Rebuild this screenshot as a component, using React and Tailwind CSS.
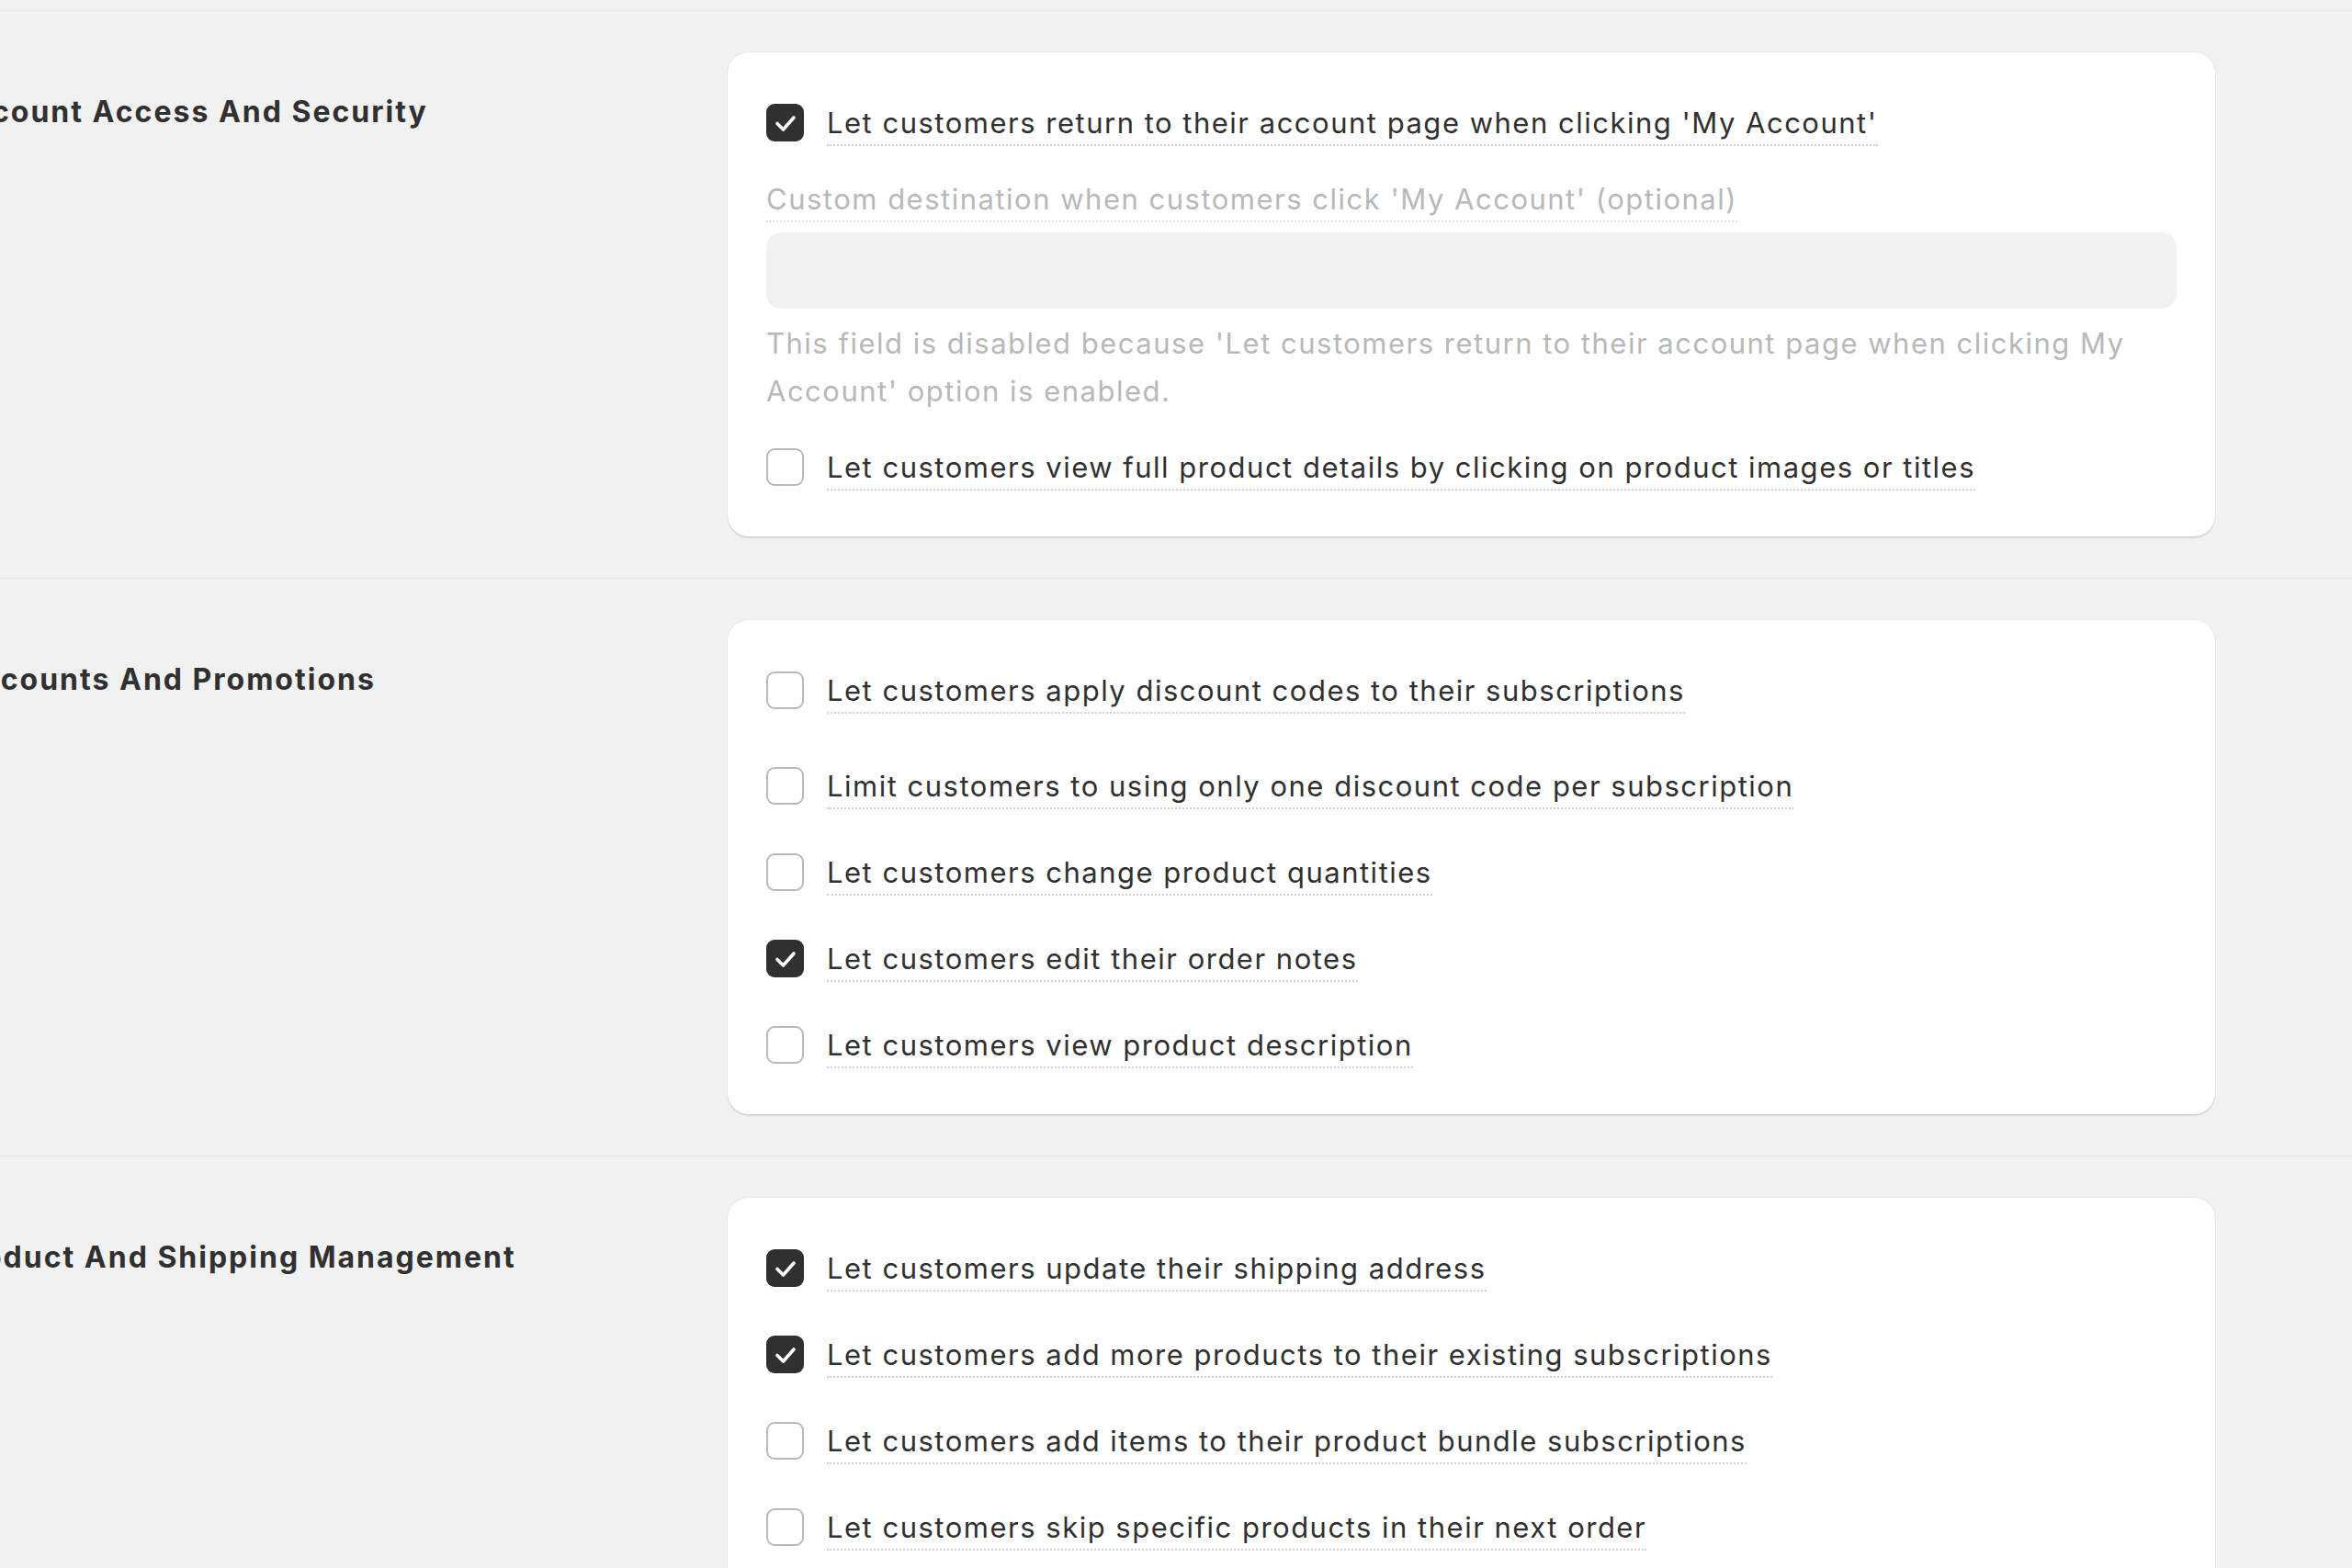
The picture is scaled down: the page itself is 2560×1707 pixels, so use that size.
import React from 'react'

const sections = [
  {
    title: 'Account Access And Security',
    kind: 'account',
  },
  {
    title: 'Discounts And Promotions',
    options: [
      { label: 'Let customers apply discount codes to their subscriptions', checked: false, extra: true },
      { label: 'Limit customers to using only one discount code per subscription', checked: false },
      { label: 'Let customers change product quantities', checked: false },
      { label: 'Let customers edit their order notes', checked: true },
      { label: 'Let customers view product description', checked: false },
    ],
  },
  {
    title: 'Product And Shipping Management',
    options: [
      { label: 'Let customers update their shipping address', checked: true },
      { label: 'Let customers add more products to their existing subscriptions', checked: true },
      { label: 'Let customers add items to their product bundle subscriptions', checked: false },
      { label: 'Let customers skip specific products in their next order', checked: false },
      { label: 'Let customers swap products in their subscriptions', checked: false },
    ],
  },
]

function Checkbox({ checked }) {
  if (checked) {
    return (
      <span className="w-[41px] h-[41px] shrink-0 rounded-[9px] bg-[#303030] flex items-center justify-center">
        <svg width="41" height="41" viewBox="0 0 41 41" fill="none">
          <path d="M12 21.5l6.5 6.5L30 15" stroke="#fff" strokeWidth="3.6" strokeLinecap="round" strokeLinejoin="round" />
        </svg>
      </span>
    )
  }
  return <span className="w-[41px] h-[41px] shrink-0 rounded-[9px] bg-white border-2 border-[#b9b9b9]" />
}

function Option({ label, checked, extra }) {
  return (
    <div className={`flex items-start gap-[25px] ${extra ? 'mb-[10px]' : ''}`}>
      <Checkbox checked={checked} />
      <span className="mt-[3px] leading-[36px] pb-[5px] border-b-2 border-dotted border-[#d0d0d0] text-[#303030]">
        {label}
      </span>
    </div>
  )
}

function AccountCard() {
  return (
    <div className="flex flex-col">
      <Option label="Let customers return to their account page when clicking 'My Account'" checked />
      <div className="mt-[40px] self-start leading-[36px] pb-[5px] border-b-2 border-dotted border-[#dedede] text-[#b8b8b8]">
        Custom destination when customers click 'My Account' (optional)
      </div>
      <div className="mt-[11px] h-[83px] w-full rounded-[16px] bg-[#f1f1f1]" />
      <p className="mt-[12px] leading-[52px] text-[#b8b8b8]">
        This field is disabled because 'Let customers return to their account page when clicking My Account' option is enabled.
      </p>
      <div className="mt-[36px]">
        <Option label="Let customers view full product details by clicking on product images or titles" checked={false} />
      </div>
    </div>
  )
}

export default function App() {
  return (
    <div className="min-h-screen w-full overflow-hidden bg-[#f1f1f1] pt-[10px] text-[31px] tracking-[1.5px] font-['Inter',sans-serif]">
      {sections.map((s, i) => (
        <section key={i} className="flex border-t-[3px] border-[#ebebeb] pt-[44px] pb-[44px]">
          <div className="w-[847px] -ml-[55px] shrink-0 pt-[45px]">
            <h2 className="leading-[40px] text-[32px] font-bold tracking-[2px] text-[#303030]">{s.title}</h2>
          </div>
          <div className="w-[1619px] shrink-0 rounded-[23px] bg-white px-[42px] pt-[56px] pb-[50px] shadow-[0_2px_1px_rgba(0,0,0,0.1),0_0_0_1px_rgba(0,0,0,0.03)]">
            {s.kind === 'account' ? (
              <AccountCard />
            ) : (
              <div className="flex flex-col gap-[48px]">
                {s.options.map((o) => (
                  <Option key={o.label} {...o} />
                ))}
              </div>
            )}
          </div>
        </section>
      ))}
    </div>
  )
}
